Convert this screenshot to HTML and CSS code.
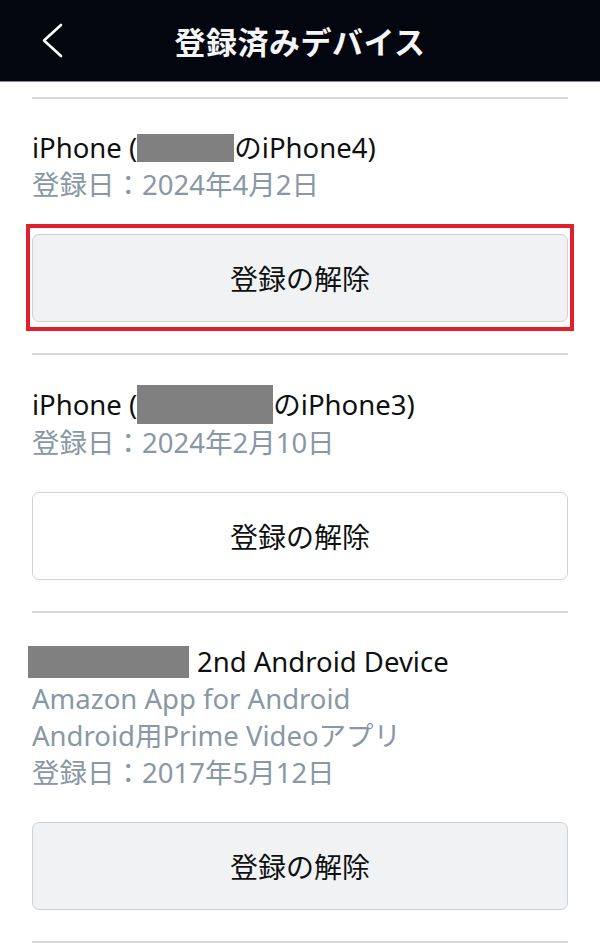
FILE: index.html
```html
<!DOCTYPE html>
<html lang="ja">
<head>
    <meta charset="UTF-8">
    <meta name="viewport" content="width=device-width, initial-scale=1.0">
    <title>登録済みデバイス</title>
    <link rel="stylesheet" href="styles.css">
</head>
<body>
    <header class="top-bar">
        <button class="back-btn" aria-label="戻る">
            <svg width="24" height="36" viewBox="0 0 24 36">
                <path d="M21 3 L4 18.5 L21 34" fill="none" stroke="#fff" stroke-width="2.6" stroke-linecap="round" stroke-linejoin="round"/>
            </svg>
        </button>
        <h1>登録済みデバイス</h1>
    </header>

    <main class="device-list">
        <section class="device">
            <div class="device-info">
                <div class="device-name">iPhone (<span class="redact redact-short"></span>のiPhone4)</div>
                <div class="device-meta">登録日：2024年4月2日</div>
            </div>
            <div class="highlight">
                <button class="deregister shaded">登録の解除</button>
            </div>
        </section>

        <section class="device">
            <div class="device-info">
                <div class="device-name">iPhone (<span class="redact redact-mid"></span>のiPhone3)</div>
                <div class="device-meta">登録日：2024年2月10日</div>
            </div>
            <button class="deregister">登録の解除</button>
        </section>

        <section class="device">
            <div class="device-info">
                <div class="device-name"><span class="redact redact-lead"></span>2nd Android Device</div>
                <div class="device-meta">Amazon App for Android</div>
                <div class="device-meta">Android用Prime Videoアプリ</div>
                <div class="device-meta">登録日：2017年5月12日</div>
            </div>
            <button class="deregister shaded">登録の解除</button>
        </section>
    </main>
</body>
</html>
```

FILE: styles.css
```css
body {
    margin: 0;
    background: #fff;
    color: #0f1111;
    font-family: "Noto Sans", "Noto Sans CJK JP", sans-serif;
}

.top-bar {
    height: 81px;
    background-color: #03060e;
    border-bottom: 1px solid #8a8d91;
    display: flex;
    align-items: center;
    justify-content: center;
    position: relative;
}

.top-bar h1 {
    margin: 0;
    color: #f4f5f7;
    font-family: "Noto Sans CJK JP", sans-serif;
    font-size: 31px;
    font-weight: 700;
    letter-spacing: 0.5px;
}

.back-btn {
    position: absolute;
    left: 40px;
    top: 22px;
    padding: 0;
    border: none;
    background: none;
    line-height: 0;
}

.device-list {
    margin-top: 15px;
    padding: 0 32px;
}

.device {
    border-top: 2px solid #d5d9dc;
    padding: 30px 0 31px;
}

.device:last-child {
    border-bottom: 2px solid #d5d9dc;
}

.device-info {
    font-size: 27.5px;
    line-height: 37px;
    margin-bottom: 31px;
}

.device-name {
    display: flex;
    align-items: center;
    white-space: nowrap;
}

.device-meta {
    color: #8898a5;
}

.redact {
    display: inline-block;
    height: 28px;
    background-color: #808080;
}

.redact-short {
    width: 97px;
}

.redact-mid {
    width: 136px;
    height: 39px;
}

.redact-lead {
    width: 161px;
    height: 32px;
    margin-left: -4px;
    margin-right: 8px;
}

.deregister {
    display: block;
    width: 100%;
    height: 88px;
    border: 1.5px solid #cdd1d5;
    border-radius: 7px;
    background-color: #fff;
    color: #0f1111;
    font-family: "Noto Sans CJK JP", sans-serif;
    font-size: 28px;
    cursor: pointer;
}

.deregister.shaded {
    background-color: #f0f2f4;
}

.highlight {
    position: relative;
}

.highlight::after {
    content: "";
    position: absolute;
    top: -10px;
    bottom: -9px;
    left: -6px;
    right: -6px;
    border: 4px solid #e0202c;
    pointer-events: none;
}
```
